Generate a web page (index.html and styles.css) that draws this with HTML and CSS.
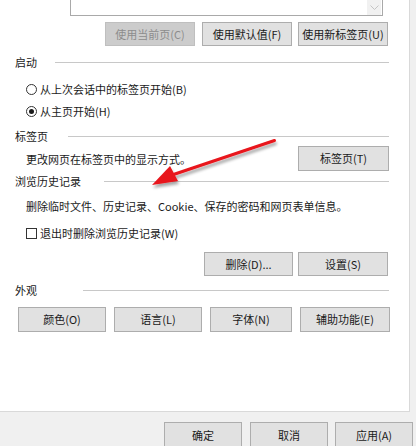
FILE: index.html
```html
<!DOCTYPE html>
<html lang="zh-CN">
<head>
<meta charset="utf-8">
<title>Internet 选项</title>
<link rel="stylesheet" href="styles.css">
</head>
<body>
<div class="page">
  <div class="panel">
    <div class="url-box"><span class="scroll-btn"><svg width="9" height="6" viewBox="0 0 9 6"><path d="M0.5 0.5 L4.5 4.5 L8.5 0.5" fill="none" stroke="#c4c4c4" stroke-width="1"/></svg></span></div>
    <div class="btn-row row1">
      <span class="btn disabled w90">使用当前页(C)</span>
      <span class="btn w90 gap7">使用默认值(F)</span>
      <span class="btn w90">使用新标签页(U)</span>
    </div>

    <div class="group-head h1"><span class="label">启动</span><span class="rule r-start"></span></div>
    <div class="option r1"><span class="radio"></span><span>从上次会话中的标签页开始(B)</span></div>
    <div class="option r2"><span class="radio checked"></span><span>从主页开始(H)</span></div>

    <div class="group-head h2"><span class="label">标签页</span><span class="rule r-tabs"></span></div>
    <div class="desc-row">
      <span class="desc">更改网页在标签页中的显示方式。</span>
      <span class="btn w91 tall">标签页(T)</span>
    </div>

    <div class="group-head h3"><span class="label">浏览历史记录</span><span class="rule r-hist"></span></div>
    <div class="desc d2">删除临时文件、历史记录、Cookie、保存的密码和网页表单信息。</div>
    <div class="option c1"><span class="checkbox"></span><span>退出时删除浏览历史记录(W)</span></div>
    <div class="btn-row row3">
      <span class="btn w89">删除(D)...</span>
      <span class="btn w90">设置(S)</span>
    </div>

    <div class="group-head h4"><span class="label">外观</span><span class="rule r-look"></span></div>
    <div class="look-row">
      <span class="btn tall">颜色(O)</span>
      <span class="btn tall">语言(L)</span>
      <span class="btn tall">字体(N)</span>
      <span class="btn tall">辅助功能(E)</span>
    </div>
  </div>

  <div class="footer">
    <span class="btn fbtn">确定</span>
    <span class="btn fbtn f2">取消</span>
    <span class="btn fbtn">应用(A)</span>
  </div>

  <svg class="arrow" width="416" height="446" viewBox="0 0 416 446">
    <defs>
      <filter id="sh" x="-20%" y="-20%" width="140%" height="160%">
        <feGaussianBlur in="SourceAlpha" stdDeviation="1.6"/>
        <feOffset dx="1" dy="3"/>
        <feComponentTransfer><feFuncA type="linear" slope="0.35"/></feComponentTransfer>
        <feMerge><feMergeNode/><feMergeNode in="SourceGraphic"/></feMerge>
      </filter>
    </defs>
    <g filter="url(#sh)">
      <path d="M274.5 140.5 L172 175" stroke="#e8141b" stroke-width="3" stroke-linecap="round" fill="none"/>
      <polygon points="152,185 170,166 178,181" fill="#e8141b"/>
    </g>
  </svg>
</div>
</body>
</html>
```

FILE: styles.css
```css
html, body {
  margin: 0;
  padding: 0;
}
body {
  background: #f0f0f0;
  font-family: "Noto Sans CJK SC", "Microsoft YaHei", "Noto Sans", sans-serif;
  font-size: 11px;
  color: #1a1a1a;
}
.page {
  position: relative;
  width: 416px;
  height: 446px;
  overflow: hidden;
}
.panel {
  box-sizing: border-box;
  width: 410px;
  height: 412px;
  background: #ffffff;
  border-right: 1px solid #d9d9d9;
  border-bottom: 1px solid #d9d9d9;
  padding: 0 21px 0 15px;
  display: flex;
  flex-direction: column;
}
.url-box {
  box-sizing: border-box;
  margin-left: 55px;
  width: 313px;
  height: 16px;
  border: 1px solid #a9a9a9;
  border-top: none;
  display: flex;
  justify-content: flex-end;
  padding-right: 1px;
}
.scroll-btn {
  width: 14px;
  height: 15px;
  background: #f1f1f1;
  display: flex;
  align-items: center;
  justify-content: center;
}
.btn {
  box-sizing: border-box;
  height: 24px;
  background: #e1e1e1;
  border: 1px solid #adadad;
  display: flex;
  align-items: center;
  justify-content: center;
  color: #1a1a1a;
  white-space: nowrap;
  line-height: 1;
}
.btn.tall { height: 25px; }
.btn.disabled {
  background: #cccccc;
  border-color: #bfbfbf;
  color: #8c8c8c;
}
.w89 { width: 89px; }
.w90 { width: 90px; }
.w91 { width: 91px; }
.gap7 { margin-left: 1px; }
.btn-row {
  display: flex;
  justify-content: flex-end;
  gap: 6px;
}
.row1 { margin-top: 6px; }
.row3 { margin-top: 10px; gap: 5px; }

.group-head {
  display: flex;
  align-items: center;
  height: 16px;
}
.group-head .label { line-height: 16px; }
.rule {
  flex: 1;
  height: 1px;
  background: #c8c8c8;
  margin-right: -1px;
}
.r-start { margin-left: 18px; }
.r-tabs { margin-left: 20px; }
.r-hist { margin-left: 23px; }
.r-look { margin-left: 46px; }
.h1 { margin-top: 8px; }
.h2 { margin-top: 6px; }
.h3 { margin-top: 2px; }
.h4 { margin-top: 6px; }

.option {
  display: flex;
  align-items: center;
  height: 22px;
  padding-left: 11px;
  gap: 3px;
}
.r1 { margin-top: 8px; }
.c1 { margin-top: 10px; height: 18px; }
.radio {
  box-sizing: border-box;
  width: 11px;
  height: 11px;
  border: 1px solid #333333;
  border-radius: 50%;
  display: flex;
  align-items: center;
  justify-content: center;
}
.radio.checked::after {
  content: "";
  width: 5px;
  height: 5px;
  border-radius: 50%;
  background: #1a1a1a;
}
.checkbox {
  box-sizing: border-box;
  width: 11px;
  height: 11px;
  border: 1px solid #333333;
  background: #ffffff;
}

.desc-row {
  display: flex;
  justify-content: space-between;
  align-items: center;
  margin-top: 2px;
  margin-right: -1px;
}
.desc {
  padding-left: 11px;
  line-height: 16px;
}
.d2 { margin-top: 9px; }

.look-row {
  display: grid;
  grid-template-columns: 88px 88px 82px 90px;
  gap: 8px;
  margin-top: 9px;
  margin-left: 3px;
}

.footer {
  display: flex;
  justify-content: flex-end;
  padding: 10px 3px 0 0;
  gap: 7px;
}
.fbtn {
  width: 78px;
  height: 26px;
}
.fbtn.f2 { margin-left: 1px; }

.arrow {
  position: absolute;
  left: 0;
  top: 0;
  pointer-events: none;
}
```
